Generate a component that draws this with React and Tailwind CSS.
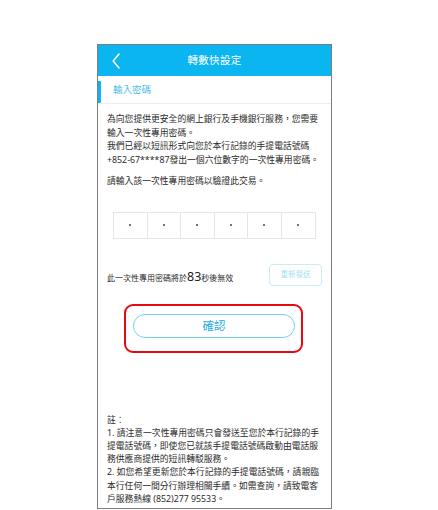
import React from "react";

const FONT = { fontFamily: '"Noto Sans", "Noto Sans CJK TC", Roboto, sans-serif' };

export default function App() {
  return (
    <div className="w-[438px] h-[510px] bg-white overflow-hidden" style={FONT}>
      <div className="ml-[97px] mt-[44px] w-[235px] h-[465px] border border-[#7d7d7d] flex flex-col overflow-hidden">
        {/* Header */}
        <div className="h-[31px] shrink-0 bg-[#0bb5ef] grid grid-cols-[1fr_auto_1fr] items-center">
          <div className="pl-[14px] flex items-center">
            <svg width="8" height="16" viewBox="0 0 8 16" fill="none">
              <path d="M7 1 L1.2 8 L7 15" stroke="#ffffff" strokeWidth="1.5" strokeLinecap="round" strokeLinejoin="round" />
            </svg>
          </div>
          <div className="text-white text-[10.5px] leading-none tracking-[0.3px]">轉數快設定</div>
          <div />
        </div>

        {/* Section title */}
        <div className="h-[28px] shrink-0 flex items-center border-b border-[#ececec]">
          <div className="w-[3px] h-[22px] mt-[4px] bg-[#0bb5ef] rounded-r-[1px]" />
          <div className="ml-[12px] text-[9.5px] text-[#4fc0ea] leading-none">輸入密碼</div>
        </div>

        {/* Description */}
        <div className="pl-[9px] pt-[9px] text-[8.8px] leading-[13.5px] text-[#2b2b2b] whitespace-nowrap">
          <div>為向您提供更安全的網上銀行及手機銀行服務，您需要</div>
          <div>輸入一次性專用密碼。</div>
          <div>我們已經以短訊形式向您於本行記錄的手提電話號碼</div>
          <div>+852-67****87發出一個六位數字的一次性專用密碼。</div>
          <div className="mt-[8px]">請輸入該一次性專用密碼以驗證此交易。</div>
        </div>

        {/* OTP boxes */}
        <div className="ml-[15px] mt-[23px] w-[203px] h-[27px] grid grid-cols-6 border border-[#e6e6e6] divide-x divide-[#e6e6e6] shrink-0">
          {[0, 1, 2, 3, 4, 5].map((i) => (
            <div key={i} className="flex items-center justify-center">
              <div className="w-[2px] h-[2px] rounded-full bg-[#444]" />
            </div>
          ))}
        </div>

        {/* Timer row */}
        <div className="mt-[25px] px-[9px] flex items-center justify-between shrink-0">
          <div className="pt-[5px] text-[8px] text-[#2b2b2b] flex items-baseline leading-none whitespace-nowrap">
            <span>此一次性專用密碼將於</span>
            <span className="text-[12.5px] text-[#222]">83</span>
            <span>秒後無效</span>
          </div>
          <div className="w-[53px] h-[22px] border border-[#c9ecf8] rounded-[4px] flex items-center justify-center text-[7.5px] text-[#a6def4] leading-none">
            重新發送
          </div>
        </div>

        {/* Confirm (highlighted) */}
        <div className="ml-[26px] mt-[18px] w-[179px] h-[49px] border-2 border-[#e8080f] rounded-[9px] pl-[7px] pt-[8px] shrink-0">
          <div className="w-[162px] h-[24px] border border-[#72d0f1] rounded-full flex items-center justify-center text-[11.5px] text-[#27ade3] leading-none">
            確認
          </div>
        </div>

        {/* Notes */}
        <div className="pl-[9px] mt-[61px] text-[8.8px] leading-[13.2px] text-[#2b2b2b] whitespace-nowrap">
          <div>註：</div>
          <div>1. 請注意一次性專用密碼只會發送至您於本行記錄的手</div>
          <div>提電話號碼，即使您已就該手提電話號碼啟動由電話服</div>
          <div>務供應商提供的短訊轉駁服務。</div>
          <div>2. 如您希望更新您於本行記錄的手提電話號碼，請親臨</div>
          <div>本行任何一間分行辦理相關手續。如需查詢，請致電客</div>
          <div>戶服務熱線 (852)277 95533。</div>
        </div>
      </div>
    </div>
  );
}
